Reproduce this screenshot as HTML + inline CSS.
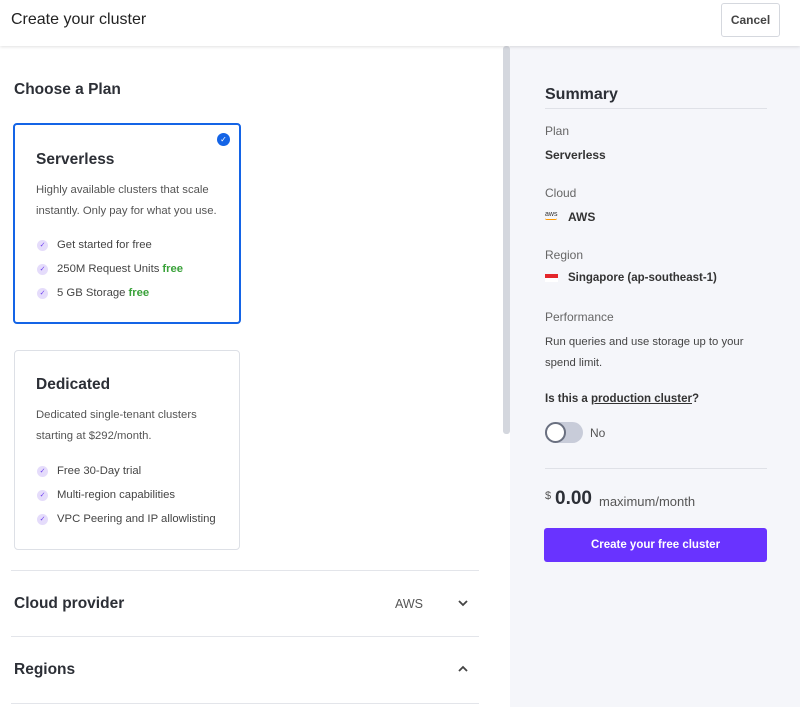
<!DOCTYPE html>
<html><head><style>
*{margin:0;padding:0;box-sizing:border-box}
body{width:800px;height:707px;overflow:hidden;background:#fff;font-family:"Liberation Sans",sans-serif;color:#2c2f36;position:relative}
.a{position:absolute}
.hdr{left:0;top:0;width:800px;height:46px;background:#fff;box-shadow:0 1px 3px rgba(0,0,0,.12);z-index:2}
.card{border:1px solid #dde0e6;border-radius:4px;background:#fff}
.li{font-size:11.3px;color:#444;display:flex;align-items:center;height:24px}
.ck{width:11px;height:11px;border-radius:50%;background:#e5dcfb;color:#6b3df0;font-size:7px;display:inline-flex;align-items:center;justify-content:center;margin-right:9px}
.g{color:#3aa23a;font-weight:bold;margin-left:3px}
.lbl{font-size:12px;color:#666}
.val{font-size:12px;font-weight:bold;color:#333}
</style></head><body>
<div class="a hdr">
 <div class="a" style="left:11px;top:11px;font-size:16px;color:#222">Create your cluster</div>
 <div class="a" style="left:721px;top:3px;width:59px;height:34px;border:1px solid #d5d8de;border-radius:3px;font-size:12px;font-weight:bold;color:#444;display:flex;align-items:center;justify-content:center">Cancel</div>
</div>
<div class="a" style="left:503px;top:46px;width:7px;height:388px;background:#d4d7de;border-radius:3px"></div>
<div class="a" style="left:510px;top:46px;width:290px;height:661px;background:#f5f6fa"></div>

<div class="a" style="left:14px;top:81px;font-size:15.5px;font-weight:bold;color:#2c2f36">Choose a Plan</div>

<div class="a card" style="left:13px;top:123px;width:228px;height:201px;border:2px solid #1464e6">
 <div class="a" style="right:9px;top:8px;width:13px;height:13px;border-radius:50%;background:#1464e6;color:#fff;font-size:8px;text-align:center;line-height:13px">✓</div>
 <div class="a" style="left:21px;top:26px;font-size:15.5px;font-weight:bold">Serverless</div>
 <div class="a" style="left:21px;top:55px;font-size:11.3px;color:#555;line-height:21px;width:200px">Highly available clusters that scale instantly. Only pay for what you use.</div>
 <div class="a" style="left:22px;top:108px">
  <div class="li"><span class="ck">✓</span>Get started for free</div>
  <div class="li"><span class="ck">✓</span>250M Request Units<span class="g">free</span></div>
  <div class="li"><span class="ck">✓</span>5 GB Storage<span class="g">free</span></div>
 </div>
</div>

<div class="a card" style="left:14px;top:350px;width:226px;height:200px">
 <div class="a" style="left:21px;top:25px;font-size:15.5px;font-weight:bold">Dedicated</div>
 <div class="a" style="left:21px;top:54px;font-size:11.3px;color:#555;line-height:21px;width:200px">Dedicated single-tenant clusters starting at $292/month.</div>
 <div class="a" style="left:22px;top:108px">
  <div class="li"><span class="ck">✓</span>Free 30-Day trial</div>
  <div class="li"><span class="ck">✓</span>Multi-region capabilities</div>
  <div class="li"><span class="ck">✓</span>VPC Peering and IP allowlisting</div>
 </div>
</div>

<div class="a" style="left:11px;top:570px;width:468px;height:1px;background:#e3e5ea"></div>
<div class="a" style="left:14px;top:595px;font-size:15.5px;font-weight:bold">Cloud provider</div>
<div class="a" style="left:395px;top:597px;font-size:12.5px;color:#555">AWS</div>
<svg class="a" style="left:457px;top:598px" width="12" height="10"><path d="M2 3l4 4 4-4" fill="none" stroke="#444" stroke-width="1.8"/></svg>
<div class="a" style="left:11px;top:636px;width:468px;height:1px;background:#e3e5ea"></div>
<div class="a" style="left:14px;top:661px;font-size:15.5px;font-weight:bold">Regions</div>
<svg class="a" style="left:457px;top:664px" width="12" height="10"><path d="M2 7l4-4 4 4" fill="none" stroke="#444" stroke-width="1.8"/></svg>
<div class="a" style="left:11px;top:703px;width:468px;height:1px;background:#e3e5ea"></div>

<div class="a" style="left:545px;top:86px;font-size:16px;font-weight:bold;color:#2c2f36">Summary</div>
<div class="a" style="left:545px;top:108px;width:222px;height:1px;background:#dfe1e7"></div>
<div class="a lbl" style="left:545px;top:124px">Plan</div>
<div class="a val" style="left:545px;top:148px">Serverless</div>
<div class="a lbl" style="left:545px;top:186px">Cloud</div>
<div class="a" style="left:545px;top:211px;font-size:7px;color:#333;line-height:7px">aws<div style="width:12px;height:2px;border-bottom:1px solid #f90;border-radius:0 0 6px 6px"></div></div>
<div class="a val" style="left:568px;top:210px">AWS</div>
<div class="a lbl" style="left:545px;top:248px">Region</div>
<div class="a" style="left:545px;top:274px;width:13px;height:8px;background:linear-gradient(#e4262b 50%,#fff 50%)"></div>
<div class="a val" style="left:568px;top:272px;font-size:11.5px">Singapore (ap-southeast-1)</div>
<div class="a lbl" style="left:545px;top:310px">Performance</div>
<div class="a" style="left:545px;top:332px;font-size:11.3px;color:#444;line-height:21px;width:225px">Run queries and use storage up to your spend limit.</div>
<div class="a val" style="left:545px;top:393px;font-size:11.5px">Is this a <u>production cluster</u>?</div>
<div class="a" style="left:545px;top:422px;width:38px;height:21px;border-radius:11px;background:#c8ccd9"></div>
<div class="a" style="left:545px;top:422px;width:21px;height:21px;border-radius:50%;background:#fff;border:2px solid #6a7080"></div>
<div class="a" style="left:590px;top:426px;font-size:12px;color:#555">No</div>
<div class="a" style="left:545px;top:468px;width:222px;height:1px;background:#dfe1e7"></div>
<div class="a" style="left:545px;top:490px;font-size:11px;color:#555">$</div>
<div class="a" style="left:555px;top:488px;font-size:19px;font-weight:bold;color:#2c2f36">0.00</div>
<div class="a" style="left:599px;top:494px;font-size:13px;color:#555">maximum/month</div>
<div class="a" style="left:544px;top:528px;width:223px;height:34px;background:#6933ff;border-radius:3px;color:#fff;font-size:11.5px;font-weight:bold;display:flex;align-items:center;justify-content:center">Create your free cluster</div>
</body></html>
